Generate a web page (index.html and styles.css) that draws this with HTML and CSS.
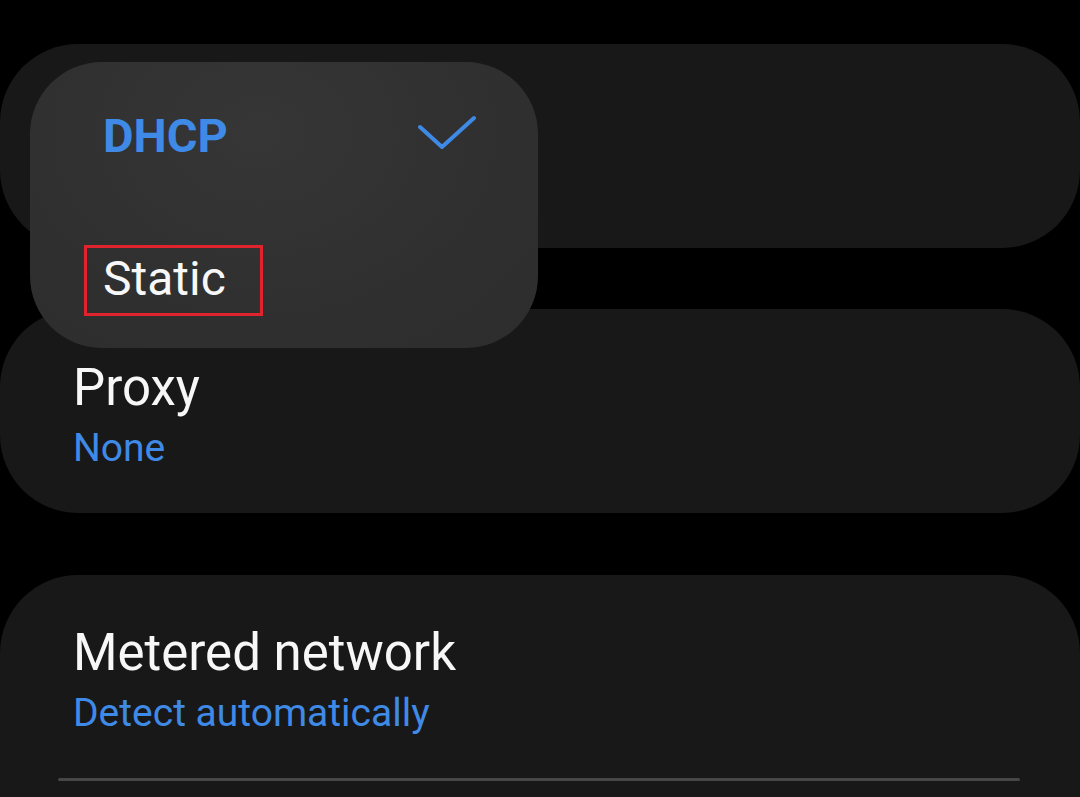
FILE: index.html
```html
<!DOCTYPE html>
<html lang="en">
<head>
<meta charset="utf-8">
<title>IP settings</title>
<link rel="stylesheet" href="styles.css">
</head>
<body>
<div class="screen">
  <div class="list">
    <div class="card card-ip"></div>
    <div class="card card-proxy">
      <div class="title">Proxy</div>
      <div class="sub">None</div>
    </div>
    <div class="card card-metered">
      <div class="title">Metered network</div>
      <div class="sub">Detect automatically</div>
      <div class="divider"></div>
    </div>
  </div>

  <div class="menu">
    <div class="menu-item selected">
      <span class="menu-label">DHCP</span>
      <svg class="check" width="60" height="36" viewBox="0 0 60 36">
        <polyline points="4,12 26,32 58,3" fill="none" stroke="#3f8ae6" stroke-width="4" stroke-linecap="round" stroke-linejoin="round"/>
      </svg>
    </div>
    <div class="menu-item">
      <span class="menu-label highlight">Static</span>
    </div>
  </div>
</div>
</body>
</html>
```

FILE: styles.css
```css
html, body {
  margin: 0;
  padding: 0;
  background: #000;
}

body {
  font-family: Roboto, "Noto Sans", "Liberation Sans", sans-serif;
  width: 1080px;
  height: 797px;
  overflow: hidden;
}

.screen {
  position: relative;
  width: 1080px;
  height: 797px;
  overflow: hidden;
}

.list {
  display: flex;
  flex-direction: column;
  gap: 61px;
  padding-top: 44px;
}

.card {
  background: #181818;
  border-radius: 78px;
  padding: 48px 0 0 73px;
  box-sizing: border-box;
}

.card-ip,
.card-proxy {
  height: 204px;
}

.card-proxy {
  padding-top: 49px;
}

.card-metered {
  margin-top: 1px;
  height: 300px;
  padding-right: 60px;
}

.title {
  color: #f7f7f7;
  font-size: 51px;
  line-height: 60px;
  white-space: nowrap;
}

.sub {
  color: #3f8ae6;
  font-size: 39px;
  line-height: 54px;
  margin-top: 3px;
  white-space: nowrap;
}

.divider {
  height: 3px;
  background: #474747;
  margin: 38px 0 0 -15px;
  border-radius: 2px;
}

.menu {
  position: absolute;
  left: 30px;
  top: 62px;
  width: 508px;
  height: 286px;
  box-sizing: border-box;
  padding: 46px 62px 0 73px;
  border-radius: 72px;
  background: radial-gradient(ellipse at 45% 25%, #363636 0%, #303030 55%, #2d2d2d 100%);
  display: flex;
  flex-direction: column;
  gap: 87px;
}

.menu-item {
  display: flex;
  align-items: center;
  justify-content: space-between;
  height: 56px;
}

.menu-label {
  position: relative;
  color: #f7f7f7;
  font-size: 48px;
  line-height: 56px;
  white-space: nowrap;
}

.selected .menu-label {
  color: #3f8ae6;
  font-weight: 700;
  font-size: 47px;
}

.check {
  display: block;
  margin-top: -6px;
}

.highlight::after {
  content: "";
  position: absolute;
  left: -19px;
  top: -6px;
  width: 173px;
  height: 65px;
  border: 3px solid #e0232d;
}
```
